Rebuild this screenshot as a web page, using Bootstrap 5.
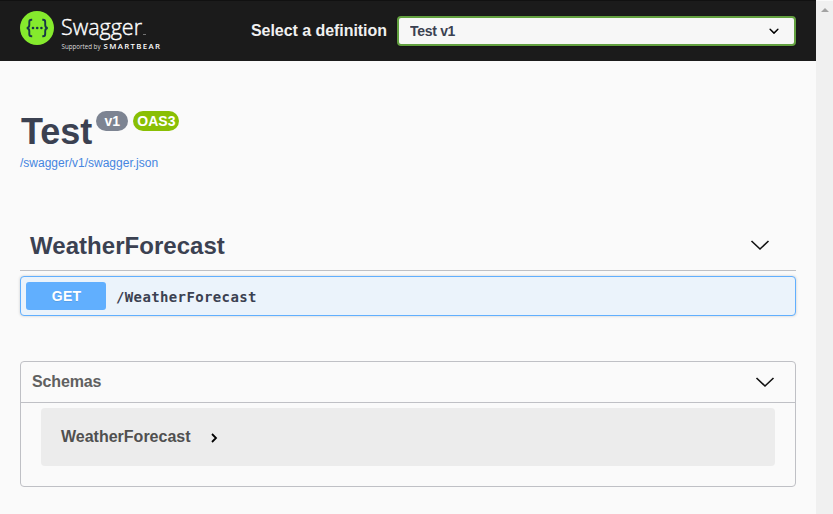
<!DOCTYPE html>
<html lang="en">
<head>
<meta charset="utf-8">
<title>Swagger UI</title>
<link rel="stylesheet" href="https://cdn.jsdelivr.net/npm/bootstrap@5.3.0/dist/css/bootstrap.min.css">
<style>
body{height:514px;overflow:hidden;background:#fafafa;color:#3b4151;font-family:"Liberation Sans",Arial,sans-serif;line-height:1}
.page{width:816px}
.track{width:17px;height:513px;margin-top:1px;background:#f0f0f0;padding-top:7px}
.topbar{height:61px;background:#1b1b1b;border-top:1px solid #111;padding:0 20px}
.brand{width:150px;height:60px}
.pick-label{width:136px;font-size:16px;color:#f0f0f0;margin:0 10px 0 81px;line-height:18px;letter-spacing:-.05px}
.definition{width:399px;height:30px;border:2px solid #62a03f;border-radius:4px;padding:0 40px 0 11px;font-size:14px;font-weight:700;letter-spacing:-.3px;color:#3b4151;background:#f7f7f7 url("data:image/svg+xml,%3Csvg xmlns='http://www.w3.org/2000/svg' viewBox='0 0 20 20'%3E%3Cpath d='M13.418 7.859a.695.695 0 0 1 .978 0 .68.68 0 0 1 0 .969l-3.908 3.83a.697.697 0 0 1-.979 0l-3.908-3.83a.68.68 0 0 1 0-.969.695.695 0 0 1 .978 0L10 11l3.418-3.141z'/%3E%3C/svg%3E") right 10px center/20px no-repeat;box-shadow:0 1px 2px #0004}
.content{padding:0 20px}
.api-info{padding-top:50px;height:159px}
.api-title{font-size:36px;font-weight:700;line-height:42px;margin:0 0 0 1px}
.pill{height:20px;border-radius:20px;font-size:14px;line-height:20px;padding:0;text-align:center;vertical-align:top}
.pill-version{width:32px;background:#7d8492;margin-left:4px}
.pill-oas{width:46px;background:#89bf04;margin-left:5px}
.api-link{font-size:12px;line-height:14px;margin-top:3px;color:#4585e0;text-decoration:none}
.tag-row{height:51px;border-bottom:1px solid #bfc0c4;padding:0 26px 0 10px}
.tag-row h2{font-size:24px;font-weight:700;margin:2px 0 0;line-height:28px;letter-spacing:.04px}
.tag-row svg{margin-bottom:1px}
.operation{height:40px;margin-top:5px;padding:0 5px;border:1px solid #61affe;border-radius:4px;background:#ebf3fb;box-shadow:0 0 3px #00000030}
.verb{width:80px;height:28px;border-radius:3px;background:#61affe;font-size:14px;line-height:28px;text-indent:1px;text-shadow:0 1px 0 #0000001a;letter-spacing:.2px}
.path{font:700 14px/20px "DejaVu Sans Mono",monospace;letter-spacing:.37px;margin:2px 0 0 10px}
.models{height:126px;margin-top:45px;border:1px solid #bfc0c5;border-radius:4px}
.models-head{height:41px;border-bottom:1px solid #bfc0c5;padding:0 20px 0 11px;font-size:16px;color:#606060}
.models-head span{letter-spacing:-.15px}
.model-box{height:58px;margin:5px 20px 0;padding-left:20px;border-radius:4px;background:#ececec;font-size:16px;color:#505050}
.model-box svg{margin:2px 0 0 16px}
</style>
<script src="https://cdn.jsdelivr.net/npm/bootstrap@5.3.0/dist/js/bootstrap.bundle.min.js"></script>
</head>
<body class="d-flex">
<div class="page">
  <header class="topbar d-flex align-items-center">
    <svg class="brand flex-shrink-0" viewBox="20 1 150 60" aria-label="Swagger">
      <circle cx="37" cy="28" r="17" fill="#85ea2d"/>
      <g fill="none" stroke="#173647" stroke-width="1.9">
        <path d="M32.200 19.800h-.8c-1.500 0-2.100.8-2.100 2.300v2.800c0 1.800-.8 2.900-2.500 3.100 1.700.2 2.500 1.300 2.500 3.100v2.800c0 1.500.6 2.300 2.100 2.300h.8"/>
        <path d="M42.300 19.800h.8c1.500 0 2.100.8 2.100 2.300v2.800c0 1.800.8 2.900 2.500 3.100-1.700.2-2.500 1.300-2.500 3.100v2.800c0 1.500-.6 2.300-2.100 2.300h-.8"/>
      </g>
      <g fill="#173647"><circle cx="33" cy="28" r="1.300"/><circle cx="37.200" cy="28" r="1.300"/><circle cx="41.400" cy="28" r="1.300"/></g>
      <g fill="#fff" font-family="Open Sans, sans-serif">
        <text x="61" y="35" font-size="22" font-weight="300" stroke="#fff" stroke-width=".4" textLength="81" lengthAdjust="spacingAndGlyphs">Swagger</text>
        <text x="61.500" y="49" font-size="6.200" fill="#ddd" textLength="39" lengthAdjust="spacingAndGlyphs">Supported by</text>
        <text x="103.500" y="49" font-size="7.800" font-weight="600" textLength="56.500">SMARTBEAR</text>
      </g>
      <path d="M143 34.500h3" stroke="#888" stroke-width=".8"/>
    </svg>
    <label class="pick-label fw-bold text-nowrap" for="definition">Select a definition</label>
    <select class="definition form-select flex-shrink-0" id="definition"><option>Test v1</option></select>
  </header>
  <main class="content">
    <section class="api-info">
      <div class="d-flex align-items-start">
        <h1 class="api-title">Test</h1>
        <span class="pill pill-version badge">v1</span>
        <span class="pill pill-oas badge">OAS3</span>
      </div>
      <a class="api-link d-block" href="#">/swagger/v1/swagger.json</a>
    </section>
    <div class="tag-row d-flex align-items-center justify-content-between">
      <h2>WeatherForecast</h2>
      <svg width="20" height="12" fill="none" stroke="#111" stroke-width="1.600"><path d="M1.500 2 10 10l8.500-8"/></svg>
    </div>
    <div class="operation d-flex align-items-center">
      <span class="verb text-white fw-bold text-center">GET</span>
      <span class="path">/WeatherForecast</span>
    </div>
    <section class="models">
      <div class="models-head d-flex align-items-center justify-content-between fw-bold">
        <span>Schemas</span>
        <svg width="20" height="12" fill="none" stroke="#111" stroke-width="1.600"><path d="M1.500 2 10 10l8.500-8"/></svg>
      </div>
      <div class="model-box d-flex align-items-center fw-bold">
        <span>WeatherForecast</span>
        <svg width="14" height="14" fill="none" stroke="#000" stroke-width="1.800"><path d="m5 3 4 4-4 4"/></svg>
      </div>
    </section>
  </main>
</div>
<div class="track d-flex justify-content-center"><svg width="8" height="5"><path d="m0 4 4-4 4 4z" fill="#a3a3a3"/></svg></div>
</body>
</html>
